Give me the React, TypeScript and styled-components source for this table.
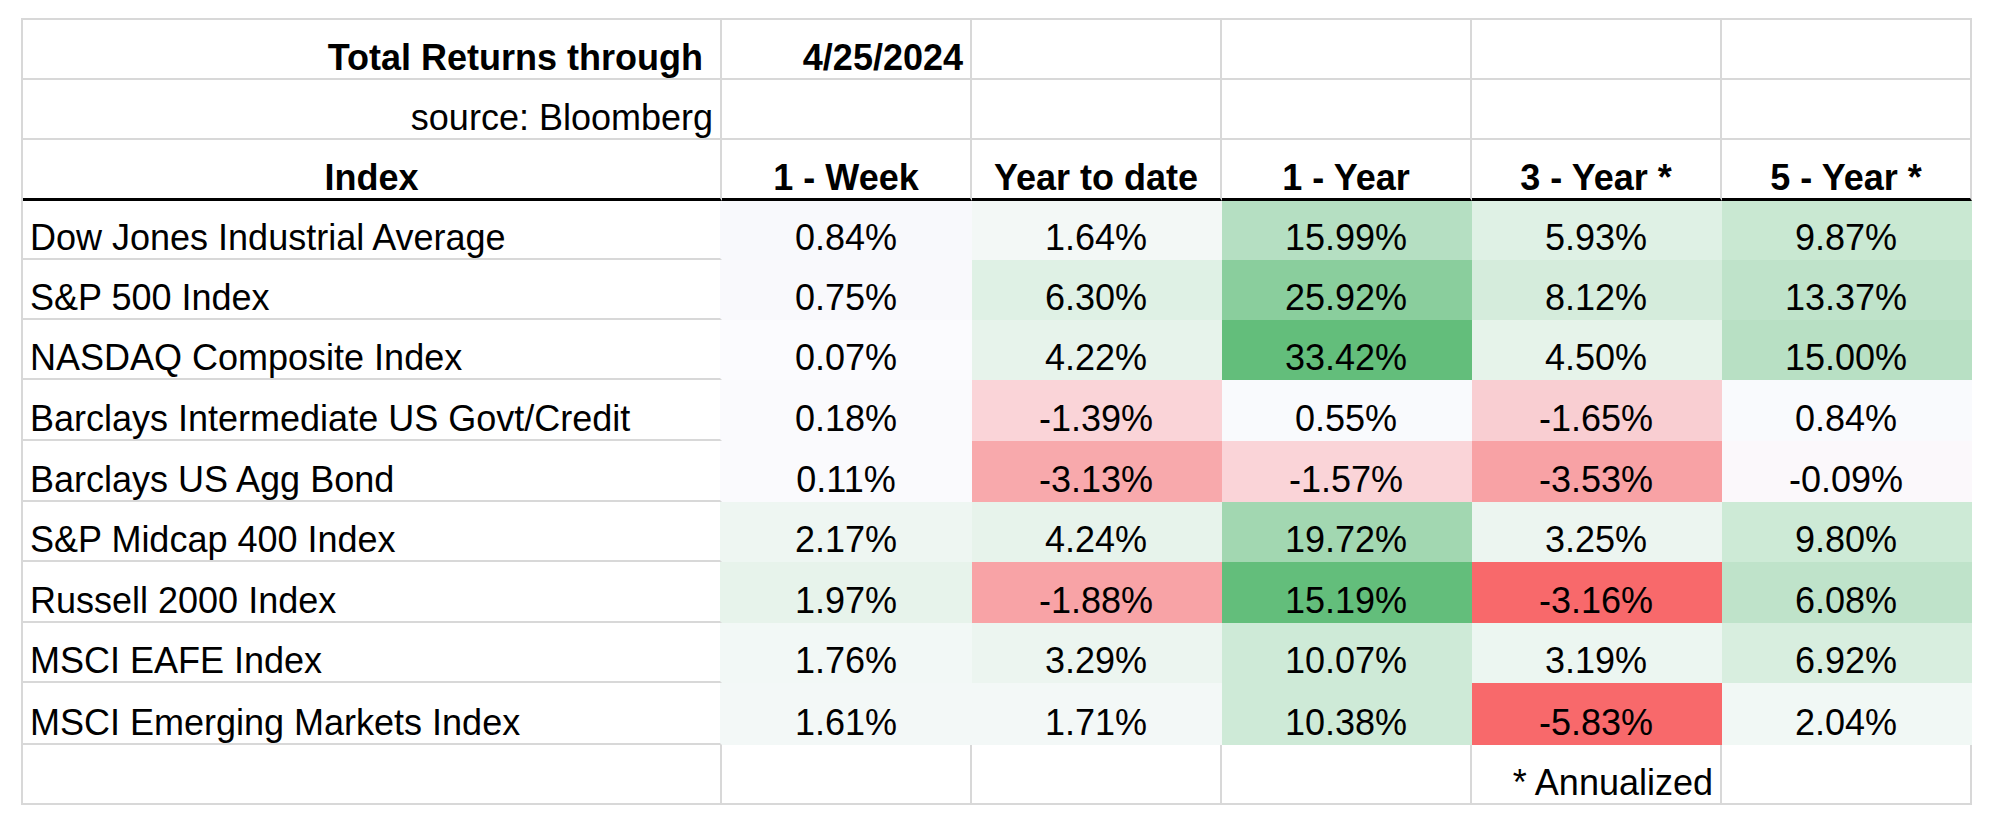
import React from "react";
import styled, { createGlobalStyle } from "styled-components";

const GRID = "#d8d8d8";

const GlobalStyle = createGlobalStyle`
  html, body { margin: 0; padding: 0; background: #ffffff; }
  body { font-family: "Liberation Sans", Arial, sans-serif; color: #000; }
`;

const Page = styled.div`
  width: 1994px;
  height: 830px;
  box-sizing: border-box;
  padding: 18px 0 0 21px;
  background: #ffffff;
`;

const Sheet = styled.div`
  display: grid;
  width: max-content;
  grid-template-columns: 699px repeat(5, 250px);
  grid-template-rows: 60px 60px 61px 59px 60px 60px 61px 61px 60px 61px 60px 62px 60px;
  border-top: 2px solid ${GRID};
  border-left: 2px solid ${GRID};
`;

type Align = "left" | "center" | "right";

const Cell = styled.div<{
  $align: Align;
  $bold?: boolean;
  $bg?: string;
  $right?: string;
  $thick?: boolean;
}>`
  display: flex;
  align-items: flex-end;
  justify-content: ${(p) =>
    p.$align === "left" ? "flex-start" : p.$align === "right" ? "flex-end" : "center"};
  box-sizing: border-box;
  min-width: 0;
  padding: 0 7px 0;
  font-size: 36px;
  line-height: 41px;
  font-weight: ${(p) => (p.$bold ? 700 : 400)};
  white-space: nowrap;
  background: ${(p) => p.$bg ?? "#ffffff"};
  border-right: 2px solid ${(p) => p.$right ?? p.$bg ?? GRID};
  border-bottom: ${(p) => (p.$thick ? "3px solid #000000" : `2px solid ${p.$bg ?? GRID}`)};
`;

type Value = [string, string];
type Row = [string, Value[]];

const headers = ["1 - Week", "Year to date", "1 - Year", "3 - Year *", "5 - Year *"];

const rows: Row[] = [
  ["Dow Jones Industrial Average", [["0.84%", "#f8f9fc"], ["1.64%", "#f3f8f6"], ["15.99%", "#b5dfc2"], ["5.93%", "#dff1e5"], ["9.87%", "#c9e8d2"]]],
  ["S&P 500 Index", [["0.75%", "#f9f9fc"], ["6.30%", "#dff1e5"], ["25.92%", "#8ace9d"], ["8.12%", "#d5ecdc"], ["13.37%", "#bfe3ca"]]],
  ["NASDAQ Composite Index", [["0.07%", "#fbfbfe"], ["4.22%", "#e7f3eb"], ["33.42%", "#63be7b"], ["4.50%", "#e6f3ea"], ["15.00%", "#b8e0c4"]]],
  ["Barclays Intermediate US Govt/Credit", [["0.18%", "#fafafd"], ["-1.39%", "#fad4d8"], ["0.55%", "#f9fafd"], ["-1.65%", "#f9ced2"], ["0.84%", "#f9fafd"]]],
  ["Barclays US Agg Bond", [["0.11%", "#fafafd"], ["-3.13%", "#f8a9ac"], ["-1.57%", "#fad4d8"], ["-3.53%", "#f8a2a5"], ["-0.09%", "#fbf8fb"]]],
  ["S&P Midcap 400 Index", [["2.17%", "#eef6f2"], ["4.24%", "#e7f3eb"], ["19.72%", "#a2d7b1"], ["3.25%", "#ecf5f0"], ["9.80%", "#cdead6"]]],
  ["Russell 2000 Index", [["1.97%", "#e7f3eb"], ["-1.88%", "#f8a3a6"], ["15.19%", "#63be7b"], ["-3.16%", "#f8696b"], ["6.08%", "#bfe3ca"]]],
  ["MSCI EAFE Index", [["1.76%", "#f2f8f6"], ["3.29%", "#ecf5f0"], ["10.07%", "#ceead7"], ["3.19%", "#ecf6f1"], ["6.92%", "#d8eedf"]]],
  ["MSCI Emerging Markets Index", [["1.61%", "#f3f8f7"], ["1.71%", "#f3f8f7"], ["10.38%", "#ceead7"], ["-5.83%", "#f8696b"], ["2.04%", "#f1f8f5"]]],
];

export default function App() {
  return (
    <Page>
      <GlobalStyle />
      <Sheet>
        <Cell $align="right" $bold>Total Returns through{"\u00a0"}</Cell>
        <Cell $align="right" $bold>4/25/2024</Cell>
        {headers.slice(1).map((h) => (
          <Cell key={"t" + h} $align="center" />
        ))}

        <Cell $align="right">source: Bloomberg</Cell>
        {headers.map((h) => (
          <Cell key={"s" + h} $align="center" />
        ))}

        <Cell $align="center" $bold $thick>Index</Cell>
        {headers.map((h) => (
          <Cell key={"h" + h} $align="center" $bold $thick>
            {h}
          </Cell>
        ))}

        {rows.map(([name, values]) => (
          <React.Fragment key={name}>
            <Cell $align="left" $right={values[0][1]}>{name}</Cell>
            {values.map(([v, bg], i) => (
              <Cell key={name + i} $align="center" $bg={bg}>
                {v}
              </Cell>
            ))}
          </React.Fragment>
        ))}

        <Cell $align="left" />
        <Cell $align="center" />
        <Cell $align="center" />
        <Cell $align="center" />
        <Cell $align="right">* Annualized</Cell>
        <Cell $align="center" />
      </Sheet>
    </Page>
  );
}
